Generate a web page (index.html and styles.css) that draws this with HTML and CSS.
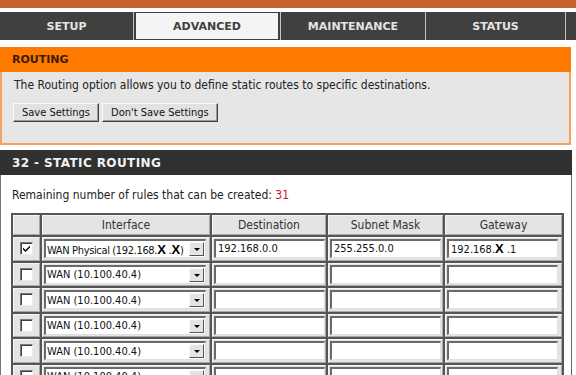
FILE: index.html
```html
<!DOCTYPE html>
<html>
<head>
<meta charset="utf-8">
<title>Routing</title>
<link rel="stylesheet" href="styles.css">
</head>
<body>
<div class="topbar"></div>
<nav class="tabs">
  <div class="tab t1">SETUP</div>
  <div class="tab t2 active"><span>ADVANCED</span></div>
  <div class="tab t3">MAINTENANCE</div>
  <div class="tab t4">STATUS</div>
  <div class="tab t5"></div>
</nav>
<section class="routing">
  <h2 class="routing-head">ROUTING</h2>
  <div class="routing-body">
    <p class="intro">The Routing option allows you to define static routes to specific destinations.</p>
    <div class="buttons">
      <button class="btn">Save Settings</button>
      <button class="btn">Don't Save Settings</button>
    </div>
  </div>
</section>
<section class="static">
  <h2 class="static-head">32 - STATIC ROUTING</h2>
  <div class="static-body">
    <p class="remaining">Remaining number of rules that can be created: <span class="red">31</span></p>
    <table class="rules">
      <colgroup>
        <col class="c1"><col class="c2"><col class="c3"><col class="c4"><col class="c5">
      </colgroup>
      <thead>
        <tr><th></th><th>Interface</th><th>Destination</th><th>Subnet Mask</th><th>Gateway</th></tr>
      </thead>
      <tbody>
        <tr>
          <td><span class="chk checked"><svg width="9" height="9" viewBox="0 0 9 9"><path d="M1 3.5 L3.5 6 L8 1.5 L8 3.5 L3.5 8 L1 5.5 Z" fill="#000"/></svg></span></td>
          <td><span class="sel"><span class="sel-text tight">WAN Physical (192.168.<b class="x">X</b> .<b class="x">X</b>)</span><span class="sel-btn"></span></span></td>
          <td><span class="field">192.168.0.0</span></td>
          <td><span class="field">255.255.0.0</span></td>
          <td><span class="field">192.168.<b class="x">X</b> .1</span></td>
        </tr>
        <tr>
          <td><span class="chk"></span></td>
          <td><span class="sel"><span class="sel-text">WAN (10.100.40.4)</span><span class="sel-btn"></span></span></td>
          <td><span class="field"></span></td><td><span class="field"></span></td><td><span class="field"></span></td>
        </tr>
        <tr>
          <td><span class="chk"></span></td>
          <td><span class="sel"><span class="sel-text">WAN (10.100.40.4)</span><span class="sel-btn"></span></span></td>
          <td><span class="field"></span></td><td><span class="field"></span></td><td><span class="field"></span></td>
        </tr>
        <tr>
          <td><span class="chk"></span></td>
          <td><span class="sel"><span class="sel-text">WAN (10.100.40.4)</span><span class="sel-btn"></span></span></td>
          <td><span class="field"></span></td><td><span class="field"></span></td><td><span class="field"></span></td>
        </tr>
        <tr>
          <td><span class="chk"></span></td>
          <td><span class="sel"><span class="sel-text">WAN (10.100.40.4)</span><span class="sel-btn"></span></span></td>
          <td><span class="field"></span></td><td><span class="field"></span></td><td><span class="field"></span></td>
        </tr>
        <tr>
          <td><span class="chk"></span></td>
          <td><span class="sel"><span class="sel-text">WAN (10.100.40.4)</span><span class="sel-btn"></span></span></td>
          <td><span class="field"></span></td><td><span class="field"></span></td><td><span class="field"></span></td>
        </tr>
      </tbody>
    </table>
  </div>
</section>
</body>
</html>
```
FILE: styles.css
```css
html, body {
  margin: 0;
  padding: 0;
  background: #fff;
  overflow: hidden;
}
body {
  width: 576px;
  height: 375px;
  font-family: "DejaVu Sans Condensed", "DejaVu Sans", sans-serif;
  font-size: 12px;
  color: #222;
}
.topbar {
  height: 8px;
  background: #c8622c;
  margin-bottom: 4px;
}
.tabs {
  display: flex;
  height: 28px;
  gap: 1px;
  background: #c4c4c4;
  margin-bottom: 7px;
}
.tab {
  background: #404040;
  color: #e4e4e4;
  font-family: "DejaVu Sans", sans-serif;
  font-weight: bold;
  font-size: 11px;
  display: flex;
  align-items: center;
  justify-content: center;
}
.t1 { width: 133px; }
.t2 { width: 142px; }
.t3 { width: 144px; }
.t4 { width: 139px; }
.t5 { flex: 1; }
.tab.active {
  padding: 1px 2px;
  align-items: stretch;
}
.tab.active span {
  flex: 1;
  background: #f4f4f4;
  color: #404040;
  display: flex;
  align-items: center;
  justify-content: center;
}
.routing {
  width: 571px;
  margin-bottom: 5px;
}
.routing-head {
  margin: 0;
  height: 25px;
  line-height: 26px;
  background: #fe7a00;
  color: #3c1c00;
  font-family: "DejaVu Sans", sans-serif;
  font-size: 11px;
  font-weight: bold;
  padding-left: 12px;
}
.routing-body {
  background: #e6e6e6;
  border: 2px solid #f5a25e;
  border-top: none;
  height: 73px;
  box-sizing: border-box;
  padding: 6px 0 0 10px;
}
.intro {
  margin: 0 0 0 2px;
  line-height: 14px;
  height: 14px;
}
.buttons {
  display: flex;
  gap: 3px;
  margin-top: 11px;
  margin-left: 1px;
}
.btn {
  font-family: "DejaVu Sans Condensed", "DejaVu Sans", sans-serif;
  font-size: 11px;
  color: #111;
  background: #e2e2e2;
  border: 1px solid;
  border-color: #f8f8f8 #404040 #404040 #f8f8f8;
  box-shadow: inset -1px -1px 0 #9a9a9a;
  height: 19px;
  padding: 0 8px;
  margin: 0;
}
.static {
  width: 572px;
}
.static-head {
  margin: 0;
  height: 25px;
  line-height: 26px;
  background: #303030;
  color: #f2f2f2;
  font-family: "DejaVu Sans", sans-serif;
  font-size: 12px;
  font-weight: bold;
  letter-spacing: 0.4px;
  padding-left: 12px;
}
.static-body {
  border-left: 1px solid #777;
  border-right: 1px solid #666;
  padding: 13px 0 0 10px;
  height: 300px;
}
.remaining {
  margin: 0 0 0 1px;
  font-size: 12px;
  line-height: 14px;
  height: 14px;
}
.red { color: #d8101c; }
.rules {
  margin-top: 11px;
  table-layout: fixed;
  border-collapse: separate;
  border-spacing: 2px;
  background: #555;
  width: 553px;
}
.c1 { width: 27px; }
.c2 { width: 168px; }
.c3 { width: 114px; }
.c4 { width: 115px; }
.c5 { width: 117px; }
.rules th, .rules td {
  background: #e4e4e4;
  padding: 0;
  border: 1px solid;
  border-color: #f6f6f6 #a8a8a8 #a8a8a8 #f6f6f6;
}
.rules th {
  height: 18px;
  font-weight: normal;
  font-size: 12px;
  color: #333;
  text-align: center;
}
.rules td {
  height: 21.5px;
  vertical-align: middle;
  font-size: 11px;
}
.chk {
  display: block;
  width: 13px;
  height: 13px;
  box-sizing: border-box;
  margin-left: 6px;
  background: #fff;
  border: 1px solid;
  border-color: #7a7a7a #ececec #ececec #7a7a7a;
  box-shadow: inset 1px 1px 0 #404040;
  position: relative;
}
.chk svg {
  position: absolute;
  left: 1px;
  top: 1px;
}
.sel {
  display: flex;
  align-items: center;
  width: 162px;
  height: 19px;
  box-sizing: border-box;
  margin-left: 1px;
  background: #fff;
  border-style: solid;
  border-width: 2px 1px 1px 2px;
  border-color: #6a6a6a #e0e0e0 #e0e0e0 #6a6a6a;
}
.sel-text {
  flex: 1;
  padding-left: 1px;
  white-space: nowrap;
  overflow: hidden;
  color: #111;
}
.sel-text.tight {
  letter-spacing: -0.35px;
}
.sel-btn {
  flex: none;
  width: 15px;
  height: 14px;
  box-sizing: border-box;
  margin-right: 1px;
  background: #e4e4e4;
  border: 1px solid;
  border-color: #fafafa #555 #555 #fafafa;
  position: relative;
}
.sel-btn::after {
  content: "";
  position: absolute;
  left: 4px;
  top: 5px;
  border-left: 3px solid transparent;
  border-right: 3px solid transparent;
  border-top: 3px solid #000;
}
.field {
  display: block;
  width: 111px;
  height: 19px;
  box-sizing: border-box;
  margin-left: 1px;
  background: #fff;
  border-style: solid;
  border-width: 2px 1px 1px 2px;
  border-color: #6a6a6a #e0e0e0 #e0e0e0 #6a6a6a;
  line-height: 16px;
  padding-left: 2px;
  color: #111;
  white-space: nowrap;
}
.x {
  font-family: "Liberation Sans", sans-serif;
  font-size: 13px;
  font-weight: bold;
  letter-spacing: 0;
  color: #000;
}
```
